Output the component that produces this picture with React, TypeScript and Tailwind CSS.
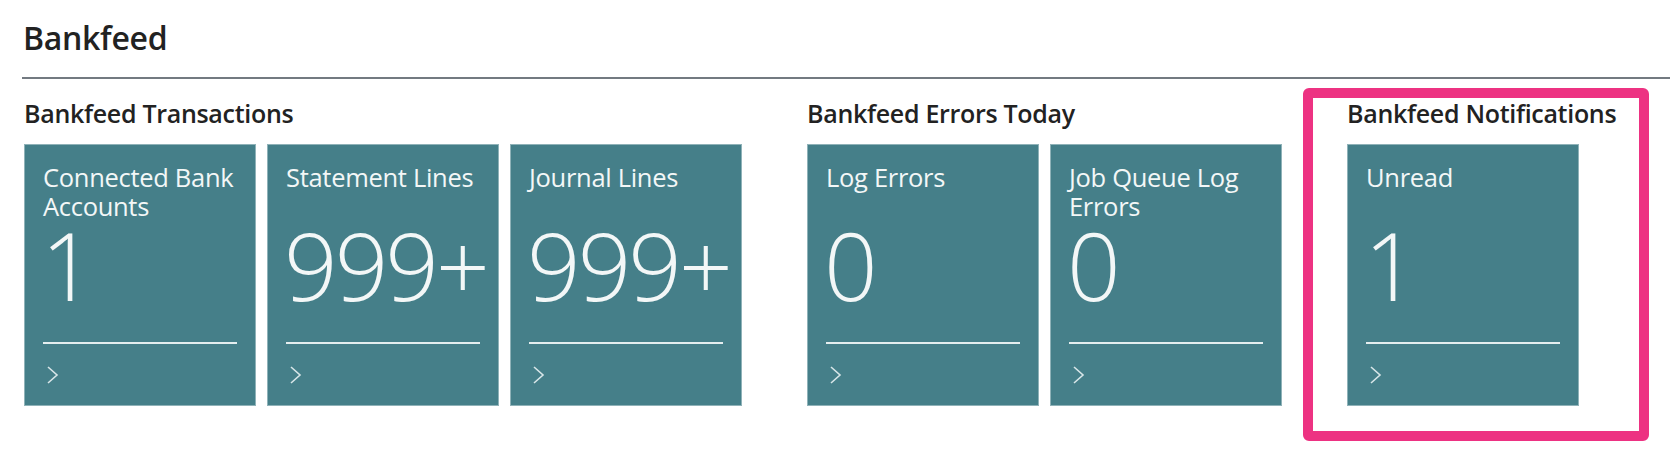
import React from "react";

interface TileProps {
  title: string;
  value: string;
}

function Tile({ title, value }: TileProps) {
  return (
    <div className="w-[232px] h-[262px] bg-[#457f89] border border-[#8fb2b8] flex flex-col pt-[18px] px-[18px] text-[#f3f7f7]">
      <div className="h-[58px] text-[25.5px] leading-[29px] tracking-[-0.3px]">{title}</div>
      <div className="mt-[4px] h-[80px] text-[94px] leading-[80px] font-light tracking-[-3px] -ml-[2px]">
        {value}
      </div>
      <div className="mt-[37px] h-[2px] bg-[#e4eeef]" />
      <div className="mt-[21px] ml-[3px]">
        {/* chevron */}
        <svg width="13" height="20" viewBox="0 0 13 20" fill="none">
          <path d="M2 2 L11 10 L2 18" stroke="#d8e6e8" strokeWidth="1.6" />
        </svg>
      </div>
    </div>
  );
}

interface GroupProps {
  heading: string;
  tiles: TileProps[];
  children?: React.ReactNode;
}

function Group({ heading, tiles, children }: GroupProps) {
  return (
    <div className="relative">
      {children}
      <div className="text-[25px] leading-[30px] font-semibold text-[#222] tracking-[-0.3px] mb-[16px] whitespace-nowrap">
        {heading}
      </div>
      <div className="flex gap-[11px]">
        {tiles.map((t) => (
          <Tile key={t.title} title={t.title} value={t.value} />
        ))}
      </div>
    </div>
  );
}

export default function App() {
  return (
    <div
      className="w-[1680px] h-[467px] bg-white pl-[22px] pr-[10px] pt-[18px]"
      style={{ fontFamily: '"Open Sans", "Noto Sans", sans-serif' }}
    >
      <h1 className="text-[32px] leading-[40px] font-semibold text-[#222] pl-[1px] tracking-[-0.3px]">
        Bankfeed
      </h1>
      <div className="mt-[19px] h-[2px] bg-[#737a81]" />
      <div className="flex gap-[65px] mt-[19px] pl-[2px]">
        <Group
          heading="Bankfeed Transactions"
          tiles={[
            { title: "Connected Bank Accounts", value: "1" },
            { title: "Statement Lines", value: "999+" },
            { title: "Journal Lines", value: "999+" },
          ]}
        />
        <Group
          heading="Bankfeed Errors Today"
          tiles={[
            { title: "Log Errors", value: "0" },
            { title: "Job Queue Log Errors", value: "0" },
          ]}
        />
        <Group heading="Bankfeed Notifications" tiles={[{ title: "Unread", value: "1" }]}>
          {/* highlight annotation */}
          <div className="absolute -left-[44px] -top-[10px] w-[346px] h-[353px] border-[10px] border-[#ed3282] rounded-[6px] pointer-events-none" />
        </Group>
      </div>
    </div>
  );
}
